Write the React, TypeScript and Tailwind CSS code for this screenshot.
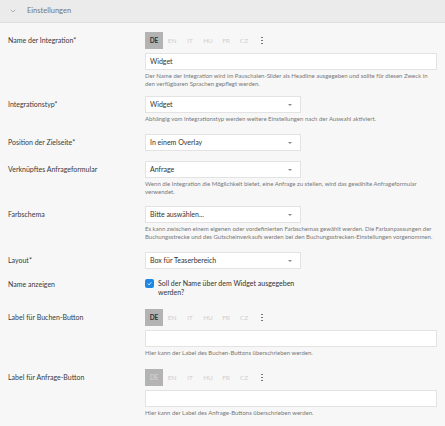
import { ChevronDown } from 'lucide-react';

const LANGS = ['DE', 'EN', 'IT', 'HU', 'FR', 'CZ'];

function Label({ children }: { children: React.ReactNode }) {
  return <div className="w-[137px] shrink-0 leading-[17px] text-[7px] text-[#3a3a3a]">{children}</div>;
}

function Help({ children }: { children: React.ReactNode }) {
  return <p className="mt-[2px] text-[6px] leading-[8px] text-[#777]">{children}</p>;
}

function LangTabs({ muted = false }: { muted?: boolean }) {
  return (
    <div className="flex items-center h-[17px] mb-[4px]">
      {LANGS.map((l, i) => (
        <div
          key={l}
          className={`w-[18px] h-[17px] flex items-center justify-center text-[6.5px] ${
            i === 0
              ? muted
                ? 'bg-[#b3b3b3] text-[#cfcfcf] font-bold'
                : 'bg-[#b3b3b3] text-[#333] font-bold'
              : 'text-[#cfcfcf]'
          }`}
        >
          {l}
        </div>
      ))}
      <div className="w-[18px] flex flex-col items-center gap-[1.5px]">
        <span className="w-[1.5px] h-[1.5px] bg-[#666] rounded-full" />
        <span className="w-[1.5px] h-[1.5px] bg-[#666] rounded-full" />
        <span className="w-[1.5px] h-[1.5px] bg-[#666] rounded-full" />
      </div>
    </div>
  );
}

function TextInput({ value = '' }: { value?: string }) {
  return (
    <div className="h-[17px] bg-white border border-[#e3e3e3] px-[4px] flex items-center text-[7px] text-[#333]">
      {value}
    </div>
  );
}

function Select({ value }: { value: string }) {
  return (
    <div className="w-[156px] h-[17px] bg-white border border-[#e3e3e3] pl-[4px] pr-[8px] flex items-center justify-between text-[7px] text-[#333]">
      <span>{value}</span>
      <span className="w-0 h-0 border-l-[2.5px] border-r-[2.5px] border-t-[2.5px] border-l-transparent border-r-transparent border-t-[#888]" />
    </div>
  );
}

export default function App() {
  return (
    <div className="w-[445px] h-[426px] bg-[#f7f7f7] overflow-hidden" style={{ fontFamily: 'Lato, "Noto Sans", sans-serif' }}>
      <div className="h-[23px] bg-[#ebebeb] border-b border-[#dedede] flex items-center pl-[9px] gap-[10px] text-[#777]">
        <ChevronDown className="w-[8px] h-[8px]" strokeWidth={1.5} />
        <span className="text-[7.5px]">Einstellungen</span>
      </div>

      <div className="px-[8px] pt-[9px]">
        <div className="flex mb-[8px]">
          <Label>Name der Integration*</Label>
          <div className="flex-1">
            <LangTabs />
            <TextInput value="Widget" />
            <Help>
              Der Name der Integration wird im Pauschalen-Slider als Headline ausgegeben und sollte für diesen Zweck in den verfügbaren Sprachen gepflegt werden.
            </Help>
          </div>
        </div>

        <div className="flex mb-[11px]">
          <Label>Integrationstyp*</Label>
          <div className="flex-1">
            <Select value="Widget" />
            <Help>Abhängig vom Integrationstyp werden weitere Einstellungen nach der Auswahl aktiviert.</Help>
          </div>
        </div>

        <div className="flex mb-[10px]">
          <Label>Position der Zielseite*</Label>
          <div className="flex-1">
            <Select value="In einem Overlay" />
          </div>
        </div>

        <div className="flex mb-[10px]">
          <Label>Verknüpftes Anfrageformular</Label>
          <div className="flex-1">
            <Select value="Anfrage" />
            <Help>
              Wenn die Integration die Möglichkeit bietet, eine Anfrage zu stellen, wird das gewählte Anfrageformular verwendet.
            </Help>
          </div>
        </div>

        <div className="flex mb-[11px]">
          <Label>Farbschema</Label>
          <div className="flex-1">
            <Select value="Bitte auswählen..." />
            <Help>
              Es kann zwischen einem eigenen oder vordefinierten Farbschemas gewählt werden. Die Farbanpassungen der Buchungsstrecke und des Gutscheinverkaufs werden bei den Buchungsstrecken-Einstellungen vorgenommen.
            </Help>
          </div>
        </div>

        <div className="flex mb-[10px]">
          <Label>Layout*</Label>
          <div className="flex-1">
            <Select value="Box für Teaserbereich" />
          </div>
        </div>

        <div className="flex mb-[12px]">
          <div className="w-[137px] shrink-0 pt-[1px] text-[7px] leading-[9px] text-[#3a3a3a]">Name anzeigen</div>
          <div className="flex-1 flex gap-[4px]">
            <div className="w-[9px] h-[9px] rounded-[2px] bg-[#1e88e5] flex items-center justify-center shrink-0">
              <svg viewBox="0 0 10 10" className="w-[7px] h-[7px]">
                <path d="M2.5 5.2 L4.3 7 L7.6 3.2" fill="none" stroke="white" strokeWidth="1.2" />
              </svg>
            </div>
            <div className="w-[146px] text-[7px] leading-[9px] text-[#333]">Soll der Name über dem Widget ausgegeben werden?</div>
          </div>
        </div>

        <div className="flex mb-[12px]">
          <Label>Label für Buchen-Button</Label>
          <div className="flex-1">
            <LangTabs />
            <TextInput />
            <Help>Hier kann der Label des Buchen-Buttons überschrieben werden.</Help>
          </div>
        </div>

        <div className="flex">
          <Label>Label für Anfrage-Button</Label>
          <div className="flex-1">
            <LangTabs muted />
            <TextInput />
            <Help>Hier kann der Label des Anfrage-Buttons überschrieben werden.</Help>
          </div>
        </div>
      </div>
    </div>
  );
}
